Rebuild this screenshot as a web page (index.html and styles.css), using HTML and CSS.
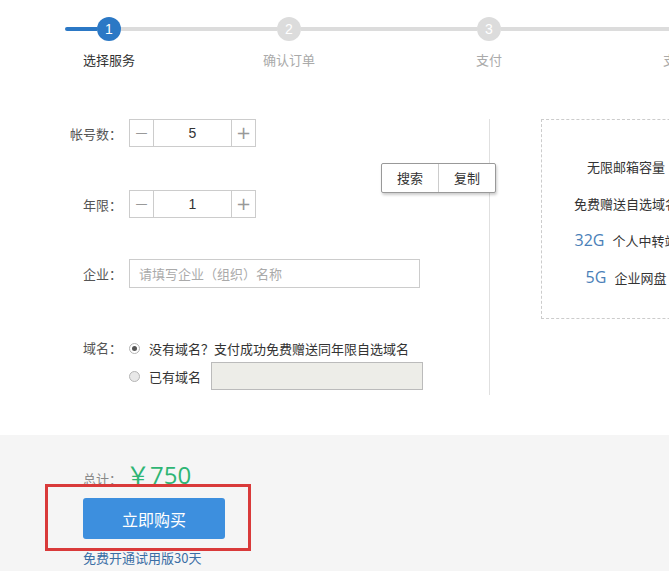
FILE: index.html
```html
<!DOCTYPE html>
<html lang="zh-CN">
<head>
<meta charset="utf-8">
<title>选择服务</title>
<link rel="stylesheet" href="styles.css">
</head>
<body>
<div class="page">
  <div class="steps">
    <div class="seg seg-active seg-first"></div>
    <div class="step active"><div class="circle">1</div><div class="label">选择服务</div></div>
    <div class="seg seg-a"></div>
    <div class="step"><div class="circle">2</div><div class="label">确认订单</div></div>
    <div class="seg seg-b"></div>
    <div class="step"><div class="circle">3</div><div class="label">支付</div></div>
    <div class="seg seg-b"></div>
    <div class="step"><div class="circle">4</div><div class="label">支付完成</div></div>
  </div>

  <div class="main">
    <div class="form">
      <div class="row row-1">
        <div class="row-label">帐号数：</div>
        <div class="counter">
          <span class="cbtn">—</span>
          <span class="cval">5</span>
          <span class="cbtn">+</span>
        </div>
      </div>
      <div class="row row-2">
        <div class="row-label">年限：</div>
        <div class="counter">
          <span class="cbtn">—</span>
          <span class="cval">1</span>
          <span class="cbtn">+</span>
        </div>
      </div>
      <div class="row row-3">
        <div class="row-label">企业：</div>
        <div class="text-input">请填写企业（组织）名称</div>
      </div>
      <div class="row row-4">
        <div class="row-label">域名：</div>
        <div class="options">
          <div class="opt opt-1"><span class="radio checked"></span><span>没有域名？支付成功免费赠送同年限自选域名</span></div>
          <div class="opt opt-2"><span class="radio"></span><span>已有域名</span><span class="domain-input"></span></div>
        </div>
      </div>
      <div class="popup"><span class="pbtn">搜索</span><span class="pbtn">复制</span></div>
    </div>
    <div class="panel">
      <div class="pline">无限邮箱容量</div>
      <div class="pline">免费赠送自选域名</div>
      <div class="pline"><span class="num">32G</span>个人中转站</div>
      <div class="pline"><span class="num">5G</span>企业网盘</div>
    </div>
  </div>

  <div class="footer">
    <div class="total"><span class="total-label">总计：</span><span class="price">￥750</span></div>
    <button class="buy">立即购买</button>
    <div class="trial">免费开通试用版30天</div>
    <div class="highlight"></div>
  </div>
</div>
</body>
</html>
```

FILE: styles.css
```css
html, body {
  margin: 0;
  padding: 0;
  background: #fff;
}
body {
  width: 669px;
  height: 572px;
  overflow: hidden;
  font-family: "Noto Sans CJK SC", "Microsoft YaHei", sans-serif;
  font-size: 13px;
  color: #333;
}
.page {
  position: relative;
  width: 669px;
  overflow: hidden;
}

/* steps */
.steps {
  display: flex;
  align-items: flex-start;
  height: 90px;
  box-sizing: border-box;
  padding: 17px 0 0 65px;
  white-space: nowrap;
}
.seg {
  height: 4px;
  margin-top: 10px;
  background: #dcdcdc;
  flex: none;
}
.seg-first { width: 32px; border-radius: 2px 0 0 2px; }
.seg-active { background: #2b78c5; }
.seg-a { width: 156px; }
.seg-b { width: 176px; }
.step {
  flex: none;
  width: 24px;
  display: flex;
  flex-direction: column;
  align-items: center;
}
.circle {
  width: 24px;
  height: 24px;
  border-radius: 50%;
  background: #dcdcdc;
  color: #fff;
  font-family: "Liberation Sans", sans-serif;
  font-size: 14px;
  line-height: 24px;
  text-align: center;
}
.step.active .circle { background: #2b78c5; }
.label {
  margin-top: 10px;
  line-height: 18px;
  font-size: 13px;
  color: #aaa;
  white-space: nowrap;
}
.step.active .label { color: #333; }

/* main */
.main {
  display: flex;
  align-items: flex-start;
  margin-top: 29px;
}
.form {
  position: relative;
  flex: none;
  width: 489px;
  height: 276px;
  border-right: 1px solid #e0e0e0;
}
.row {
  display: flex;
  align-items: center;
}
.row-label {
  width: 122px;
  margin-right: 7px;
  text-align: right;
  color: #555;
  flex: none;
}
.row-1 { height: 28px; margin-bottom: 43px; }
.row-2 { height: 28px; margin-bottom: 41px; }
.row-3 { height: 29px; margin-bottom: 50px; }
.row-4 { align-items: flex-start; }
.row-4 .row-label { line-height: 20px; }

.counter {
  display: flex;
  width: 127px;
  height: 28px;
  border: 1px solid #ccc;
  box-sizing: border-box;
}
.cbtn {
  width: 23px;
  flex: none;
  text-align: center;
  line-height: 26px;
  color: #999;
  font-family: "DejaVu Sans", sans-serif;
  font-size: 15px;
}
.cbtn:first-child { border-right: 1px solid #ccc; font-size: 12px; }
.cbtn:last-child { border-left: 1px solid #ccc; font-size: 18px; }
.cval {
  flex: 1;
  text-align: center;
  line-height: 26px;
  font-family: "Liberation Sans", sans-serif;
  font-size: 14px;
  color: #333;
}
.text-input {
  width: 291px;
  height: 29px;
  border: 1px solid #ccc;
  box-sizing: border-box;
  padding-left: 9px;
  line-height: 27px;
  color: #aaa;
}

.options {
  display: flex;
  flex-direction: column;
}
.opt {
  display: flex;
  align-items: center;
  color: #333;
}
.opt-1 { height: 20px; margin-bottom: 4px; }
.opt-2 { height: 28px; }
.radio {
  width: 11px;
  height: 11px;
  border-radius: 50%;
  border: 1px solid #b5b5b5;
  box-sizing: border-box;
  background: #e8e8e8;
  margin: 0 9px 0 0;
  flex: none;
  position: relative;
}
.radio.checked { background: #fff; }
.radio.checked::after {
  content: "";
  position: absolute;
  left: 2px;
  top: 2px;
  width: 5px;
  height: 5px;
  border-radius: 50%;
  background: #555;
}
.domain-input {
  width: 212px;
  height: 28px;
  margin-left: 10px;
  background: #edede8;
  border: 1px solid #bbb;
  box-sizing: border-box;
}

.popup {
  position: absolute;
  left: 381px;
  top: 44px;
  display: flex;
  height: 30px;
  background: #fff;
  border: 1px solid #999;
  border-radius: 2px;
  box-shadow: 1px 2px 3px rgba(0,0,0,0.2);
  box-sizing: border-box;
}
.pbtn {
  width: 56px;
  text-align: center;
  line-height: 28px;
  color: #333;
}
.pbtn:first-child { border-right: 1px solid #ccc; }

/* right panel */
.panel {
  flex: none;
  width: 170px;
  height: 200px;
  margin-left: 51px;
  border: 1px dashed #ccc;
  box-sizing: border-box;
  padding-top: 28px;
  text-align: center;
  white-space: nowrap;
}
.pline {
  line-height: 37px;
  height: 37px;
  color: #333;
}
.num {
  font-family: "Open Sans", "Liberation Sans", sans-serif;
  font-size: 16px;
  color: #4a7fb8;
  margin-right: 8px;
}

/* footer */
.footer {
  position: relative;
  margin-top: 40px;
  height: 136px;
  background: #f5f5f5;
  padding: 24px 0 0 83px;
  box-sizing: border-box;
}
.total {
  display: flex;
  align-items: baseline;
  height: 32px;
  line-height: 32px;
}
.total-label {
  color: #888;
  margin-right: 4px;
}
.price {
  font-family: "Open Sans", "Liberation Sans", sans-serif;
  font-size: 24px;
  color: #2fb574;
}
.buy {
  display: block;
  margin-top: 7px;
  width: 142px;
  height: 41px;
  border: none;
  border-radius: 3px;
  background: #3d8fde;
  color: #fff;
  font-family: "Noto Sans CJK SC", sans-serif;
  font-size: 16px;
  padding: 0;
}
.trial {
  margin-top: 10px;
  line-height: 18px;
  color: #3a6ea5;
}
.highlight {
  position: absolute;
  left: 45px;
  top: 49px;
  width: 206px;
  height: 67px;
  border: 3px solid #d93a3a;
  box-sizing: border-box;
}
```
